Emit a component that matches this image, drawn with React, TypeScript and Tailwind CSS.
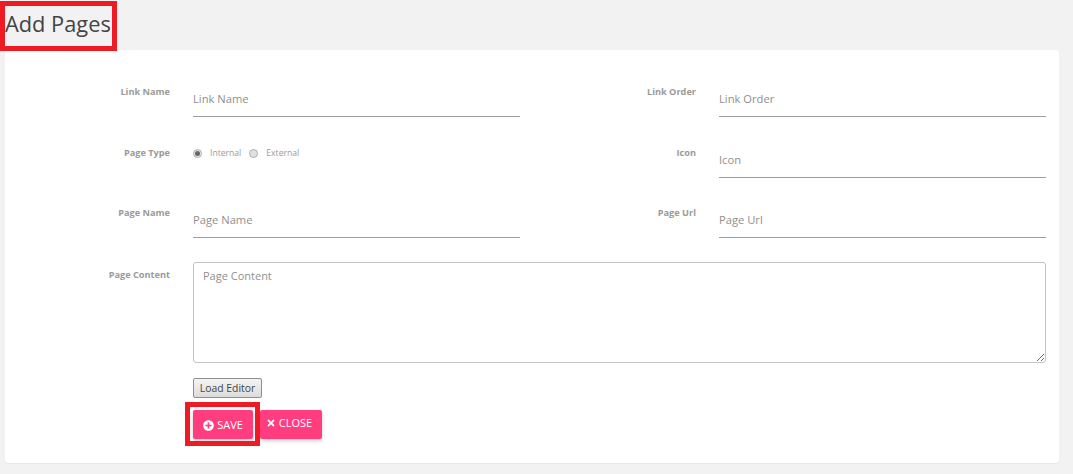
import React from 'react';
import { FaPlusCircle, FaTimes } from 'react-icons/fa';

const font = "font-['Open_Sans','Noto_Sans',sans-serif]";

const Label: React.FC<{ text: string }> = ({ text }) => (
  <label className="block w-[165px] shrink-0 pt-[1px] text-right text-[9.2px] font-bold leading-[14px] text-[#9a9a9a]">{text}</label>
);

const Field: React.FC<{ label: string; wide: string }> = ({ label, wide }) => (
  <div className={`flex ${wide}`}>
    <Label text={label} />
    <div className="ml-[23px] flex h-[33px] w-[327px] items-center border-b border-[#9e9e9e] pb-[2px] text-[11.2px] text-[#8f8f8f]">
      {label}
    </div>
  </div>
);

export default function App() {
  return (
    <div className={`${font} relative h-[474px] w-[1073px] overflow-hidden bg-[#f2f2f2]`}>
      <h1 className="h-[50px] pl-[5px] pt-[6px] text-[21.8px] leading-[36px] text-[#444444]">Add Pages</h1>
      <div className="absolute left-0 top-[1px] h-[50px] w-[117px] border-[5px] border-[#ed1c24]" />

      <div className="ml-[5px] h-[413px] w-[1054px] rounded-[3px] bg-white pt-[34px] shadow-[0_1px_1px_rgba(0,0,0,0.04)]">
        <div className="flex h-[61px]">
          <Field label="Link Name" wide="w-[526px]" />
          <Field label="Link Order" wide="" />
        </div>

        <div className="flex h-[60px]">
          <div className="flex w-[526px]">
            <Label text="Page Type" />
            <div className="ml-[23px] mt-[1px] flex h-[14px] items-center gap-[8px] text-[8.6px] text-[#9a9a9a]">
              <span className="flex h-[9px] w-[9px] items-center justify-center rounded-full border border-[#b0b0b0] bg-[#e6e6e6]">
                <span className="h-[5px] w-[5px] rounded-full bg-[#666666]" />
              </span>
              <span>Internal</span>
              <span className="h-[9px] w-[9px] rounded-full border border-[#b0b0b0] bg-[#e0e0e0]" />
              <span>External</span>
            </div>
          </div>
          <Field label="Icon" wide="" />
        </div>

        <div className="flex h-[62px]">
          <Field label="Page Name" wide="w-[526px]" />
          <Field label="Page Url" wide="" />
        </div>

        <div className="flex">
          <Label text="Page Content" />
          <div className="ml-[23px] -mt-[5px]">
            <textarea
              placeholder="Page Content"
              className="block h-[101px] w-[853px] rounded-[3px] border border-[#c4c4c4] px-[9px] py-[4px] text-[11px] leading-[17px] text-[#8f8f8f] placeholder:text-[#8f8f8f] outline-none"
            />
            <button className="mt-[15px] block h-[20px] w-[69px] rounded-[2px] border border-[#8e8e8e] bg-gradient-to-b from-[#f4f4f4] to-[#dcdcdc] text-[10.4px] leading-none text-[#444444]">
              Load Editor
            </button>
            <div className="mt-[12px] flex items-start gap-[7px]">
              <button className="flex h-[29px] w-[60px] items-center justify-center gap-[3px] rounded-[2px] bg-[#ff3d7f] pt-[1px] text-[11px] font-medium text-white shadow-[0_2px_4px_rgba(0,0,0,0.2)]">
                <FaPlusCircle className="h-[11px] w-[11px]" />
                SAVE
              </button>
              <button className="flex h-[29px] w-[62px] items-center justify-center gap-[3px] rounded-[2px] bg-[#ff3d7f] pb-[3px] pr-[4px] text-[11px] font-medium text-white shadow-[0_2px_4px_rgba(0,0,0,0.2)]">
                <FaTimes className="h-[10px] w-[10px]" />
                CLOSE
              </button>
            </div>
          </div>
        </div>
      </div>
      <div className="absolute left-[185px] top-[402px] h-[44px] w-[75px] border-[5px] border-[#ed1c24]" />
    </div>
  );
}
